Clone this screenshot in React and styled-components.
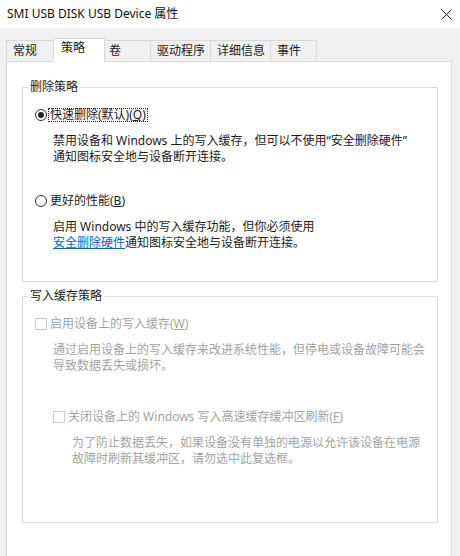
import React from "react";
import styled, { createGlobalStyle } from "styled-components";

const GlobalStyle = createGlobalStyle`
  html, body { margin: 0; padding: 0; background: #f0f0f0; }
  body {
    font-family: "Noto Sans", "Noto Sans CJK SC", sans-serif;
    font-size: 12px;
    color: #1b1b1b;
  }
  #root { width: 460px; height: 556px; overflow: hidden; }
`;

const Window = styled.div`
  width: 460px;
  height: 556px;
  display: flex;
  flex-direction: column;
  overflow: hidden;
  background: #f0f0f0;
`;

const TitleBar = styled.div`
  box-sizing: border-box;
  height: 28px;
  flex: none;
  display: flex;
  align-items: center;
  justify-content: space-between;
  padding: 0 8px 0 7px;
  background: #ffffff;
`;

const Title = styled.span`
  font-size: 12px;
  line-height: 16px;
  color: #111;
`;

const Body = styled.div`
  flex: 1;
  display: flex;
  flex-direction: column;
  padding-top: 10px;
  min-height: 0;
`;

const TabStrip = styled.div`
  display: flex;
  align-items: flex-end;
  height: 23px;
  padding-left: 6px;
  flex: none;
`;

const Tab = styled.div`
  box-sizing: border-box;
  width: ${(p) => p.$w}px;
  height: ${(p) => (p.$active ? 24 : 21)}px;
  margin: ${(p) => (p.$active ? "0 -2px -1px -1px" : "0")};
  border: 1px solid #d9d9d9;
  border-bottom: none;
  border-left: ${(p) => (p.$first || p.$active ? "1px solid #d9d9d9" : "none")};
  background: ${(p) => (p.$active ? "#ffffff" : "#f0f0f0")};
  padding-left: ${(p) => (p.$active ? 7 : 6)}px;
  line-height: ${(p) => (p.$active ? 18 : 20)}px;
  white-space: nowrap;
  color: #1b1b1b;
  position: ${(p) => (p.$active ? "relative" : "static")};
  z-index: ${(p) => (p.$active ? 1 : "auto")};
`;

const Panel = styled.div`
  flex: 1;
  margin: 0 8px 0 6px;
  border: 1px solid #d9d9d9;
  border-bottom: none;
  background: #ffffff;
  padding: 25px 13px 0 15px;
`;

const Group = styled.div`
  border: 1px solid #dcdcdc;
  margin-top: ${(p) => p.$mt || 0}px;
  padding: 0 0 ${(p) => p.$pb}px 12px;
  display: flex;
  flex-direction: column;
  align-items: flex-start;
`;

const Legend = styled.span`
  margin: -9px 0 0 -7px;
  padding: 0 2px;
  background: #ffffff;
  line-height: 16px;
  color: #1b1b1b;
`;

const Row = styled.div`
  display: flex;
  align-items: center;
  height: 16px;
  margin-top: ${(p) => p.$mt || 0}px;
  margin-left: ${(p) => p.$indent || 0}px;
`;

const Radio = styled.span`
  box-sizing: border-box;
  width: 12px;
  height: 12px;
  border-radius: 50%;
  border: 1px solid #333;
  background: #fff;
  display: flex;
  align-items: center;
  justify-content: center;
  flex: none;
  &::after {
    content: "";
    display: ${(p) => (p.$checked ? "block" : "none")};
    width: 6px;
    height: 6px;
    border-radius: 50%;
    background: #222;
  }
`;

const Check = styled.span`
  box-sizing: border-box;
  width: 12px;
  height: 12px;
  border: 1px solid #c8c8c8;
  background: #fff;
  flex: none;
`;

const Label = styled.span`
  margin-left: 1px;
  padding: 0 1px;
  line-height: 12px;
  border: 1px dotted ${(p) => (p.$focus ? "#222" : "transparent")};
  color: ${(p) => (p.$disabled ? "#a3a3a3" : "#1b1b1b")};
  white-space: nowrap;
`;

const Desc = styled.div`
  margin-top: 10px;
  margin-left: ${(p) => p.$indent}px;
  line-height: 16px;
  white-space: nowrap;
  color: ${(p) => (p.$disabled ? "#a3a3a3" : "#1b1b1b")};
`;

const Link = styled.span`
  color: #0066cc;
  text-decoration: underline;
`;

const U = styled.span`
  text-decoration: underline;
`;

const CloseIcon = () => (
  <svg width="11" height="11" viewBox="0 0 11 11">
    <path d="M0.5 0.5 L10.5 10.5 M10.5 0.5 L0.5 10.5" stroke="#1a1a1a" strokeWidth="1" fill="none" />
  </svg>
);

const tabs = [
  { label: "常规", w: 48, first: true },
  { label: "策略", w: 52, active: true },
  { label: "卷", w: 48 },
  { label: "驱动程序", w: 60 },
  { label: "详细信息", w: 60 },
  { label: "事件", w: 46 },
];

export default function App() {
  return (
    <>
      <GlobalStyle />
      <Window>
        <TitleBar>
          <Title>SMI USB DISK USB Device 属性</Title>
          <CloseIcon />
        </TitleBar>
        <Body>
          <TabStrip>
            {tabs.map((t) => (
              <Tab key={t.label} $w={t.w} $active={t.active} $first={t.first}>
                {t.label}
              </Tab>
            ))}
          </TabStrip>
          <Panel>
            <Group $pb={30}>
              <Legend>删除策略</Legend>
              <Row $mt={12}>
                <Radio $checked />
                <Label $focus>
                  快速删除(默认)(<U>Q</U>)
                </Label>
              </Row>
              <Desc $indent={18}>
                禁用设备和 Windows 上的写入缓存，但可以不使用“安全删除硬件”
                <br />
                通知图标安全地与设备断开连接。
              </Desc>
              <Row $mt={28}>
                <Radio />
                <Label>
                  更好的性能(<U>B</U>)
                </Label>
              </Row>
              <Desc $indent={18}>
                启用 Windows 中的写入缓存功能，但你必须使用
                <br />
                <Link>安全删除硬件</Link>通知图标安全地与设备断开连接。
              </Desc>
            </Group>
            <Group $mt={14} $pb={55}>
              <Legend>写入缓存策略</Legend>
              <Row $mt={12}>
                <Check />
                <Label $disabled>
                  启用设备上的写入缓存(<U>W</U>)
                </Label>
              </Row>
              <Desc $indent={18} $disabled>
                通过启用设备上的写入缓存来改进系统性能，但停电或设备故障可能会
                <br />
                导致数据丢失或损坏。
              </Desc>
              <Row $mt={35} $indent={18}>
                <Check />
                <Label $disabled>
                  关闭设备上的 Windows 写入高速缓存缓冲区刷新(<U>F</U>)
                </Label>
              </Row>
              <Desc $indent={37} $disabled>
                为了防止数据丢失，如果设备没有单独的电源以允许该设备在电源
                <br />
                故障时刷新其缓冲区，请勿选中此复选框。
              </Desc>
            </Group>
          </Panel>
        </Body>
      </Window>
    </>
  );
}
